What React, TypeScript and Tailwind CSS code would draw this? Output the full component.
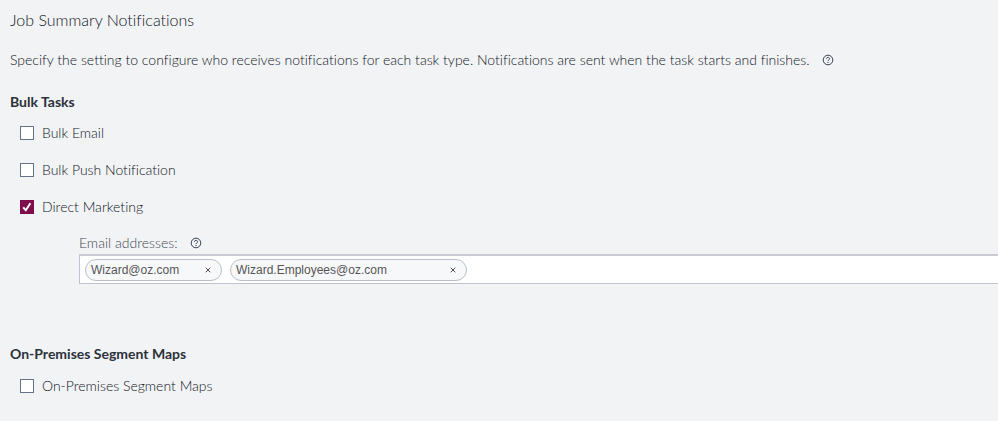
import { useState } from "react";

type CheckProps = {
  id: string;
  label: string;
  checked: boolean;
  onToggle: (id: string) => void;
};

const initialChecked: Record<string, boolean> = {
  bulkEmail: false,
  bulkPush: false,
  directMarketing: true,
  segmentMaps: false,
};

const initialEmails = [
  { address: "Wizard@oz.com", size: "w-[137px]" },
  { address: "Wizard.Employees@oz.com", size: "w-[237px]" },
];

const HelpButton = ({ label }: { label: string }) => (
  <button type="button" aria-label={label} className="shrink-0 text-[#3a4350]">
    <svg viewBox="0 0 12 12" className="size-3" fill="none" stroke="currentColor">
      <circle cx="6" cy="6" r="4.8" strokeWidth="1" />
      <path d="M4.4 4.9c0-2 3.2-2 3.2-.1 0 1.1-1.6 1.1-1.6 2.3" strokeWidth="1" />
      <path d="M6 7.9v1.1" strokeWidth="1.1" />
    </svg>
  </button>
);

const CheckRow = ({ id, label, checked, onToggle }: CheckProps) => (
  <div className="flex h-5 items-center gap-2 pl-[10px]">
    <span className="relative flex size-3.5">
      <input
        id={id}
        type="checkbox"
        checked={checked}
        onChange={() => onToggle(id)}
        className="size-3.5 appearance-none border border-[#667386] bg-white checked:border-[#7a0c48] checked:bg-[#7f0e4c]"
      />
      {checked && (
        <svg viewBox="0 0 14 14" className="pointer-events-none absolute inset-0 size-3.5" fill="none" stroke="white" strokeWidth="2">
          <path d="M3.2 7.4l2.6 2.8 4.6-7" />
        </svg>
      )}
    </span>
    <label htmlFor={id}>{label}</label>
  </div>
);

const App = () => {
  const [checked, setChecked] = useState(initialChecked);
  const [emails, setEmails] = useState(initialEmails);
  const [draft, setDraft] = useState("");

  const toggle = (id: string) => setChecked({ ...checked, [id]: !checked[id] });

  const removeEmail = (address: string) =>
    setEmails(emails.filter((email) => email.address !== address));

  return (
    <main className="min-h-screen bg-[#f2f3f5] pl-[10px] pt-2 pb-6 font-['Lato','Liberation_Sans',sans-serif] text-[14px] leading-5 font-light text-[#0f151d] [font-variant-ligatures:none]">
      <h1 className="text-[16px] leading-6">Job Summary Notifications</h1>
      <div className="mt-[18px] flex items-center gap-3">
        <p>
          Specify the setting to configure who receives notifications for each task type. Notifications are sent when the task starts and finishes.
        </p>
        <HelpButton label="About notifications" />
      </div>

      <section className="mt-[22px]">
        <h2 className="font-bold text-[#2b313a]">Bulk Tasks</h2>
        <div className="mt-[11px] flex flex-col gap-[17px]">
          <CheckRow id="bulkEmail" label="Bulk Email" checked={checked.bulkEmail} onToggle={toggle} />
          <CheckRow id="bulkPush" label="Bulk Push Notification" checked={checked.bulkPush} onToggle={toggle} />
          <CheckRow id="directMarketing" label="Direct Marketing" checked={checked.directMarketing} onToggle={toggle} />
        </div>

        <div className="mt-4 pl-[69px]">
          <div className="flex items-center gap-3 text-[#3f4954]">
            <label htmlFor="emails">Email addresses:</label>
            <HelpButton label="About email addresses" />
          </div>
          <div className="mt-px flex h-[30px] items-center gap-2 border border-r-0 border-[#bfc3cd] border-t-2 border-t-[#c9ccd5] bg-white pl-[5px] font-['Liberation_Sans',sans-serif] text-[12px] font-normal">
            {emails.map(({ address, size }) => (
              <span
                key={address}
                className={`flex h-[22px] shrink-0 items-center justify-between rounded-full border border-[#b9bfca] bg-[#f7f8fa] pl-[5px] pr-2 text-[#555] ${size}`}
              >
                {address}
                <button type="button" aria-label={`Remove ${address}`} onClick={() => removeEmail(address)} className="p-0.5 text-[#5c4a48]">
                  <svg viewBox="0 0 6 6" className="size-1.5" stroke="currentColor" strokeWidth="1">
                    <path d="M.7.7l4.6 4.6M5.3.7L.7 5.3" />
                  </svg>
                </button>
              </span>
            ))}
            <input
              id="emails"
              type="text"
              value={draft}
              onChange={(e) => setDraft(e.target.value)}
              className="min-w-0 flex-1 bg-transparent outline-none"
            />
          </div>
        </div>
      </section>

      <section className="mt-[60px]">
        <h2 className="font-bold text-[#2b313a]">On-Premises Segment Maps</h2>
        <div className="mt-3">
          <CheckRow id="segmentMaps" label="On-Premises Segment Maps" checked={checked.segmentMaps} onToggle={toggle} />
        </div>
      </section>
    </main>
  );
};

export default App;
